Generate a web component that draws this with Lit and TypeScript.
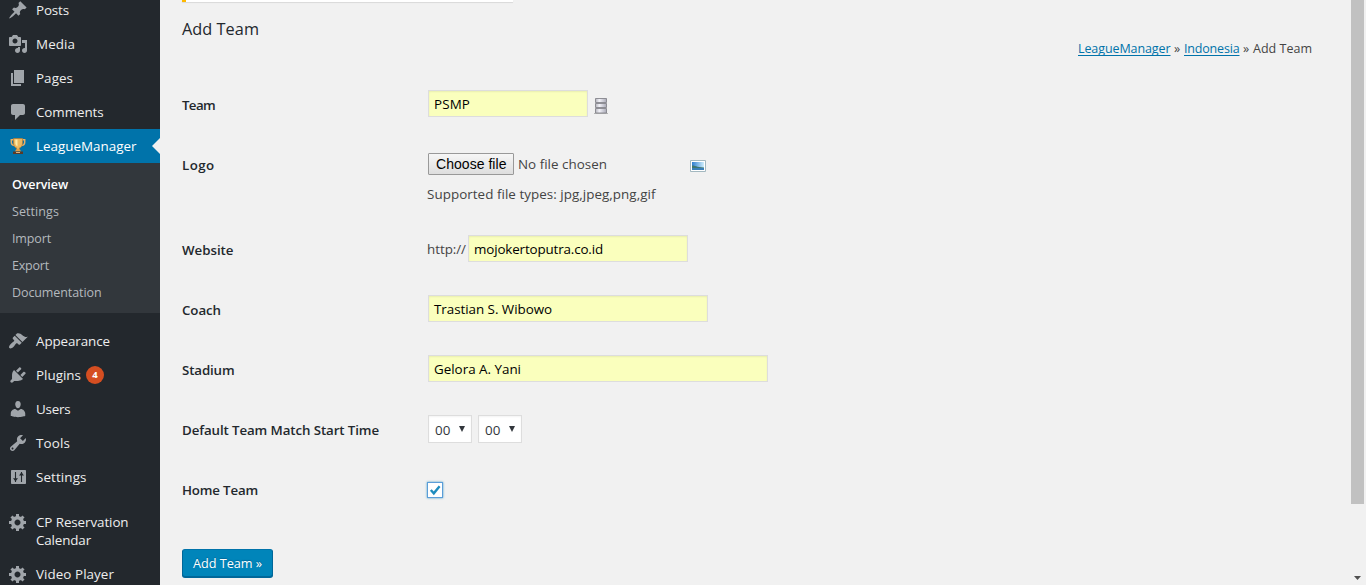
import { LitElement, html, css, svg } from "lit";
import { customElement, property } from "lit/decorators.js";

// Inline text whose tracking is adjusted so that the run spans `w` pixels.
@customElement("fit-text")
class FitText extends LitElement {
  @property({ type: Number }) w = 0;
  @property() text = "";
  static styles = css`
    :host { display: inline-block; white-space: pre; text-decoration: inherit; }
  `;
  render() {
    return html`<span>${this.text}</span>`;
  }
  updated() {
    const el = this.renderRoot.querySelector("span") as HTMLElement;
    el.style.letterSpacing = "0";
    const natural = el.getBoundingClientRect().width;
    if (!this.w || !natural) return;
    el.style.letterSpacing = `${(this.w - natural) / this.text.length}px`;
    this.style.width = `${this.w}px`;
  }
}

const t = (text: string, w: number) => html`<fit-text .text=${text} .w=${w}></fit-text>`;

const gear = svg`<path d="M18 12h-2.18c-.17.7-.44 1.35-.81 1.93l1.54 1.54-2.1 2.1-1.54-1.54c-.58.36-1.23.63-1.91.79V19H8v-2.18c-.68-.16-1.33-.43-1.91-.79l-1.54 1.54-2.12-2.12 1.54-1.54c-.36-.58-.63-1.23-.79-1.91H1V9.03h2.17c.16-.7.44-1.35.8-1.94L2.43 5.55l2.1-2.1 1.54 1.54c.58-.37 1.24-.64 1.93-.81V2h3v2.18c.68.16 1.33.43 1.91.79l1.54-1.54 2.12 2.12-1.54 1.54c.36.59.64 1.24.8 1.94H18V12zm-8.5 1.5c1.66 0 3-1.34 3-3s-1.34-3-3-3-3 1.34-3 3 1.34 3 3 3z"/>`;

const icons: Record<string, unknown> = {
  post: svg`<path d="M10.44 3.02l1.82-1.82 6.36 6.35-1.83 1.82c-1.05-.68-2.48-.57-3.41.36l-.75.75c-.92.93-1.04 2.35-.35 3.41l-1.83 1.82-2.41-2.41-2.8 2.79c-.42.42-3.38 2.71-3.8 2.29s1.86-3.39 2.28-3.81l2.79-2.79L4.1 9.36l1.83-1.82c1.05.69 2.48.57 3.4-.36l.75-.75c.93-.92 1.05-2.35.36-3.41z"/>`,
  media: svg`<path d="M13 11V4c0-.55-.45-1-1-1h-1.67L9 1H5L3.67 3H2c-.55 0-1 .45-1 1v7c0 .55.45 1 1 1h10c.55 0 1-.45 1-1zM7 4.5c1.38 0 2.5 1.12 2.5 2.5S8.38 9.5 7 9.5 4.5 8.38 4.5 7 5.62 4.5 7 4.5zM14 6h5v10.5c0 1.38-1.12 2.5-2.5 2.5S14 17.88 14 16.5s1.12-2.5 2.5-2.5c.17 0 .34.02.5.05V9h-3V6zm-4 8.05V13h2v3.5c0 1.38-1.12 2.5-2.5 2.5S7 17.88 7 16.5 8.12 14 9.5 14c.17 0 .34.02.5.05z"/>`,
  page: svg`<path d="M6 15V2h10v13H6zm-1 1h8v2H3V5h2v11z"/>`,
  comment: svg`<path d="M5 2h10c1.1 0 2 .9 2 2v7c0 1.1-.9 2-2 2h-3l-5 5v-5H5c-1.1 0-2-.9-2-2V4c0-1.1.9-2 2-2z"/>`,
  trophy: svg`
    <path d="M6 3.700H3.300v2.500c0 2 1.700 3.300 3.900 3.300M14 3.700h2.700v2.500c0 2-1.700 3.300-3.900 3.300" fill="none" stroke="#e8b068" stroke-width="1.500"/>
    <path d="M5.500 2.500h9V7c0 2.700-1.500 4.600-3.200 5v2H8.700v-2C7 11.600 5.500 9.700 5.500 7z" fill="#ecb95f" stroke="#b97a30" stroke-width=".7"/>
    <path d="M7.300 3.500h2.200v7c-1.400-.8-2.200-2-2.200-3.500z" fill="#fdeaa8"/>
    <path d="M8 13.500h4l1 2H7z" fill="#e0a04a"/>
    <path d="M5 15.500h10V18H5z" fill="#5b3a25"/><path d="M8 16h4v1H8z" fill="#d9b080"/>`,
  brush: svg`<path d="M14.48 11.06L7.41 3.99l1.5-1.5c.5-.56 2.3-.47 3.51.32 1.21.8 1.43 1.28 2.91 2.1 1.18.64 2.45 1.26 4.45.85zm-.71.71L6.7 4.7 4.93 6.47c-.39.39-.39 1.02 0 1.41l1.06 1.06c.39.39.39 1.03 0 1.42-.6.6-1.43 1.11-2.21 1.69-.35.26-.7.53-1.01.84C1.43 14.23.4 16.08 1.4 17.07c.99 1 2.84-.03 4.18-1.36.31-.31.58-.66.85-1.02.57-.78 1.08-1.61 1.69-2.21.39-.39 1.02-.39 1.41 0l1.06 1.06c.39.39 1.02.39 1.41 0z"/>`,
  plug: svg`<path d="M13.11 4.36L9.87 7.6 8 5.73l3.24-3.24c.35-.34 1.05-.2 1.56.32.52.51.66 1.21.31 1.55zm-8 1.77l.91-1.12 9.01 9.01-1.19.84c-.71.71-2.63 1.16-3.82 1.16H6.14L4.9 17.26c-.59.59-1.54.59-2.12 0-.59-.58-.59-1.53 0-2.12l1.24-1.24v-3.88c0-1.13.4-3.19 1.09-3.89zm7.26 3.97l3.24-3.24c.34-.35 1.04-.21 1.55.31.52.51.66 1.21.31 1.55l-3.24 3.25z"/>`,
  user: svg`<path d="M10 9.25c-2.27 0-2.73-3.44-2.73-3.44C7 4.02 7.82 2 9.97 2c2.16 0 2.98 2.02 2.71 3.81 0 0-.41 3.44-2.68 3.44zm0 2.57L12.72 10c2.39 0 4.52 2.33 4.52 4.53v2.49s-3.65 1.13-7.24 1.13c-3.65 0-7.24-1.13-7.24-1.13v-2.49c0-2.25 1.94-4.48 4.47-4.48z"/>`,
  wrench: svg`<path d="M16.68 9.77c-1.34 1.34-3.3 1.67-4.95.99l-5.41 6.52c-.99.99-2.59.99-3.58 0s-.99-2.59 0-3.57l6.52-5.42c-.68-1.65-.35-3.61.99-4.95 1.28-1.28 3.12-1.62 4.72-1.06l-2.89 2.89 2.82 2.82 2.86-2.87c.53 1.58.18 3.39-1.08 4.65zM3.81 16.21c.4.39 1.04.39 1.43 0 .4-.4.4-1.04 0-1.43-.39-.4-1.03-.4-1.43 0-.39.39-.39 1.03 0 1.43z"/>`,
  sliders: svg`<path d="M4 3h13c.55 0 1 .45 1 1v12c0 .55-.45 1-1 1H4c-.55 0-1-.45-1-1V4c0-.55.45-1 1-1z"/><path d="M7.500 5v10M13.500 5v10" stroke="#23282d" stroke-width="1.100"/><path d="M5 11.300h5L7.500 14.500zM11 8.500h5L13.500 5.300z" fill="#23282d"/>`,
  gear,
};

interface Item { icon: string; lines: [string, number][]; badge?: string; current?: boolean; }

const top: Item[] = [
  { icon: "post", lines: [["Posts", 33]] },
  { icon: "media", lines: [["Media", 39]] },
  { icon: "page", lines: [["Pages", 37]] },
  { icon: "comment", lines: [["Comments", 67.5]] },
  { icon: "trophy", lines: [["LeagueManager", 100.5]], current: true },
];
const sub: [string, number][] = [["Overview", 56], ["Settings", 47], ["Import", 39], ["Export", 37], ["Documentation", 89.5]];
const mid: Item[] = [
  { icon: "brush", lines: [["Appearance", 74]] },
  { icon: "plug", lines: [["Plugins", 45]], badge: "4" },
  { icon: "user", lines: [["Users", 34.5]] },
  { icon: "wrench", lines: [["Tools", 34]] },
  { icon: "sliders", lines: [["Settings", 50.5]] },
];
const low: Item[] = [
  { icon: "gear", lines: [["CP Reservation", 92.5], ["Calendar", 55]] },
  { icon: "gear", lines: [["Video Player", 78]] },
];

@customElement("side-menu")
class SideMenu extends LitElement {
  static styles = css`
    :host { display: block; width: 160px; flex: none; background: #23282d; color: #eee; font-size: 13.4px; line-height: 18px; }
    nav { display: flex; flex-direction: column; margin-top: -7px; }
    .item { display: flex; align-items: flex-start; position: relative; padding: 8px 0 8px 8px; }
    .item svg { width: 20px; height: 20px; margin: -1px 8px -1px 0; fill: #a0a5aa; flex: none; }
    .lines { display: flex; flex-direction: column; align-items: flex-start; }
    .current { background: #0073aa; color: #fff; }
    .current::after { content: ""; position: absolute; right: 0; top: 9px; border: 8px solid transparent; border-right-color: #f1f1f1; border-left: 0; }
    .badge { width: 18px; height: 18px; margin: 0 0 0 5px; border-radius: 50%; background: #d54e21; color: #fff; font-size: 9.5px; font-weight: 700; line-height: 18px; text-align: center; }
    .sub { background: #32373c; padding: 8px 12px 7px; font-size: 12.5px; color: #b4b9be; display: flex; flex-direction: column; }
    .sub div { height: 27px; line-height: 27px; }
    .sub .on { color: #fff; font-weight: 600; }
    .gap { height: 11px; }
  `;
  item(i: Item) {
    return html`<div class="item ${i.current ? "current" : ""}">
      <svg viewBox="0 0 20 20">${icons[i.icon]}</svg>
      <div class="lines">${i.lines.map(([s, w]) => t(s, w))}</div>
      ${i.badge ? html`<span class="badge">${i.badge}</span>` : ""}
    </div>`;
  }
  render() {
    return html`<nav>
      ${top.map((i) => this.item(i))}
      <div class="sub">${sub.map(([s, w], n) => html`<div class=${n === 0 ? "on" : ""}>${t(s, w)}</div>`)}</div>
      <div class="gap"></div>
      ${mid.map((i) => this.item(i))}
      <div class="gap"></div>
      ${low.map((i) => this.item(i))}
    </nav>`;
  }
}

@customElement("app-root")
class AppRoot extends LitElement {
  static styles = css`
    :host { display: flex; width: 1366px; height: 585px; overflow: hidden; background: #f1f1f1; font-family: "Open Sans", "Noto Sans", sans-serif; color: #444; font-size: 13.4px; }
    * { box-sizing: border-box; }
    main { flex: 1; padding-left: 22px; display: flex; flex-direction: column; align-items: flex-start; }
    .notice { width: 331px; height: 2px; background: #fff; border-left: 4px solid #ffb900; box-shadow: 0 1px 1px rgba(0,0,0,.1); flex: none; }
    .head { display: flex; justify-content: space-between; width: 1130px; height: 73px; }
    h1 { margin: 15px 0 0; font-size: 16.3px; line-height: 24px; font-weight: 450; color: #23282d; }
    .crumbs { margin-top: 37px; line-height: 20px; font-size: 12.5px; display: flex; }
    a { color: #0073aa; text-decoration: underline; text-underline-offset: 2px; text-decoration-thickness: 1px; text-decoration-skip-ink: none; }
    .row { display: flex; height: 60px; }
    .row.tall { height: 85px; }
    .label { width: 245px; padding-top: 20px; line-height: 20px; font-size: 13.3px; font-weight: 600; color: #23282d; }
    .cell { display: flex; align-items: flex-start; padding: 15px 0 0 1px; }
    .field { height: 27px; border: 1px solid #ddd; background: #faffbd; box-shadow: inset 0 1px 2px rgba(0,0,0,.07); color: #000; padding: 0 5px; line-height: 26px; }
    .w160 { width: 160px; } .w220 { width: 220px; } .w280 { width: 280px; } .w340 { width: 340px; }
    .db { width: 16px; height: 16px; margin: 8px 0 0 5px; }
    .stack { display: flex; flex-direction: column; padding: 18px 0 0; }
    .filerow { display: flex; align-items: flex-start; padding-left: 1px; height: 22px; }
    .file { width: 86px; height: 22px; border: 1px solid #999; border-radius: 1px; background: linear-gradient(#f6f6f6, #dedede); color: #000; font-family: "Liberation Sans", sans-serif; font-size: 14px; line-height: 20px; padding-left: 7px; }
    .none { margin: 1px 83px 0 4px; line-height: 20px; }
    .pic { width: 16px; height: 16px; margin-top: 5px; }
    .hint { line-height: 20px; margin-top: 9px; }
    .http { line-height: 28px; margin-left: -1px; margin-right: 2px; }
    .http fit-text { vertical-align: top; }
    .select { display: flex; width: 44px; height: 28px; border: 1px solid #ddd; background: #fff; box-shadow: inset 0 1px 2px rgba(0,0,0,.05); margin-right: 6px; padding-left: 6px; line-height: 28px; color: #32373c; }
    .select svg { width: 6px; height: 6px; margin: 10px 0 0 8px; }
    .check { width: 16px; height: 16px; margin: 7px 0 0 -1px; background: #fff; border: 1px solid #5b9dd9; box-shadow: 0 0 2px rgba(30,140,190,.8); }
    .check svg { display: block; width: 14px; height: 14px; }
    .submit { margin-top: 29px; width: 91px; height: 28px; border: 1px solid #006799; border-top-color: #0073aa; border-radius: 3px; background: #0085ba; box-shadow: 0 1px 0 #006799; color: #fff; line-height: 26px; padding-left: 10px; font-size: 12.7px; text-shadow: 0 -1px 1px #006799; flex: none; }
    .scroll { width: 15px; flex: none; display: flex; flex-direction: column; justify-content: space-between; }
    .thumb { width: 13px; height: 504px; background: #c1c1c1; }
    .arrow { width: 7px; height: 4px; margin: 0 0 5px 3px; }
  `;
  row(label: string, w: number, cell: unknown, tall = false) {
    return html`<div class="row ${tall ? "tall" : ""}"><div class="label">${t(label, w)}</div>${cell}</div>`;
  }
  select() {
    return html`<div class="select">${t("00", 15.5)}<svg viewBox="0 0 6 6"><path d="M0 0h6L3 6z" fill="#32373c"/></svg></div>`;
  }
  render() {
    return html`
      <side-menu></side-menu>
      <main>
        <div class="notice"></div>
        <div class="head">
          <h1>${t("Add Team", 77)}</h1>
          <div class="crumbs"><a>${t("LeagueManager", 92.5)}</a>${t(" » ", 13.5)}<a>${t("Indonesia", 55.5)}</a>${t(" » ", 13.5)}${t("Add Team", 59)}</div>
        </div>
        ${this.row("Team", 33, html`<div class="cell"><div class="field w160">${t("PSMP", 36)}</div>
          <svg class="db" viewBox="0 0 16 16">
            <defs><linearGradient id="metal"><stop offset="0" stop-color="#b4b4bc"/><stop offset=".35" stop-color="#f2f2f8"/><stop offset="1" stop-color="#a9a9b6"/></linearGradient></defs>
            <path d="M1 15.500h14" stroke="#b5b5b5"/>
            <path d="M2.500.500h11v4h-11zM2.500 5.500h11v4h-11zM2.500 10.500h11v4.500h-11z" fill="url(#metal)" stroke="#85858b" stroke-width=".9"/>
          </svg></div>`)}
        ${this.row("Logo", 32.5, html`<div class="stack">
          <div class="filerow"><div class="file">${t("Choose file", 70.5)}</div><div class="none">${t("No file chosen", 89)}</div>
            <svg class="pic" viewBox="0 0 16 16">
              <defs><linearGradient id="sky"><stop offset="0" stop-color="#2f7fd0"/><stop offset="1" stop-color="#cfeefc"/></linearGradient></defs>
              <path d="M.500 2.500h15v11H.500z" fill="#fff" stroke="#a3b8c0"/>
              <path d="M2 4h12v8H2z" fill="url(#sky)"/>
              <path d="M2 7.500c3 0 4 1.500 12 2V11H2z" fill="#3f7770"/><path d="M2 10h12v2H2z" fill="#3a7fb8"/>
            </svg></div>
          <div class="hint">${t("Supported file types: jpg,jpeg,png,gif", 228.5)}</div>
        </div>`, true)}
        ${this.row("Website", 51.5, html`<div class="cell"><span class="http">${t("http://", 39)}</span><div class="field w220">${t("mojokertoputra.co.id", 129)}</div></div>`)}
        ${this.row("Coach", 39, html`<div class="cell"><div class="field w280">${t("Trastian S. Wibowo", 118)}</div></div>`)}
        ${this.row("Stadium", 52.5, html`<div class="cell"><div class="field w340">${t("Gelora A. Yani", 87)}</div></div>`)}
        ${this.row("Default Team Match Start Time", 197, html`<div class="cell">${this.select()}${this.select()}</div>`)}
        ${this.row("Home Team", 76, html`<div class="cell"><div class="check"><svg viewBox="0 0 14 14"><path d="M2.800 7l3 3.300L11.600 3.200" fill="none" stroke="#1e8cbe" stroke-width="2.400"/></svg></div></div>`)}
        <div class="submit">${t("Add Team »", 69)}</div>
      </main>
      <div class="scroll"><div class="thumb"></div><svg class="arrow" viewBox="0 0 7 4"><path d="M0 0h7L3.500 4z" fill="#505050"/></svg></div>
    `;
  }
}
